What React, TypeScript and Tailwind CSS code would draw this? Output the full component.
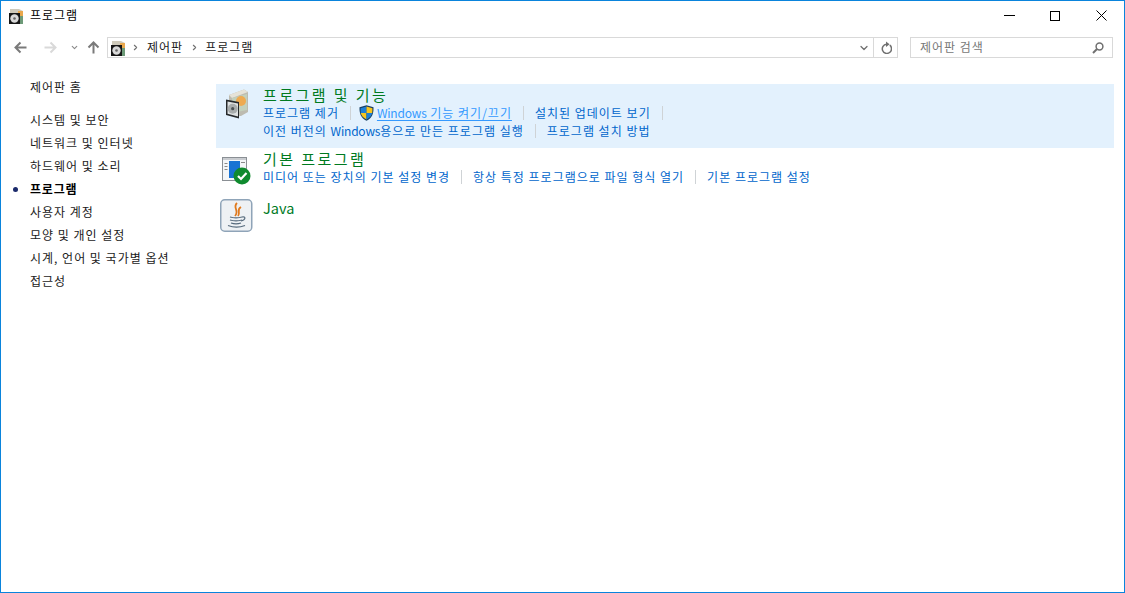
import { ChevronDown, ChevronRight } from "lucide-react";
import type { ReactNode } from "react";

const font = { fontFamily: '"Noto Sans CJK KR", "Noto Sans", sans-serif' };

function SmallProgramsIcon() {
  return (
    <svg width="16" height="16" viewBox="0 0 16 16">
      <path d="M2 1 L11 1 L15 3 L15 8 L2 5 Z" fill="#cfcabb" />
      <rect x="10" y="3" width="5" height="5" fill="#eaa84c" />
      <rect x="10" y="8" width="5" height="8" fill="#6d9a78" />
      <rect x="1" y="5" width="11" height="11" fill="#161616" />
      <circle cx="6.5" cy="10.5" r="4.2" fill="#d9d9d9" />
      <circle cx="6.5" cy="10.5" r="1.3" fill="#666" />
    </svg>
  );
}

function BigProgramsIcon() {
  return (
    <svg width="26" height="30" viewBox="0 0 26 30">
      <path d="M5 6 L20 0.5 L24 3 L24 23 L17 27 L5 27 Z" fill="#bdbbb0" />
      <path d="M5 6 L20 0.5 L24 3 L8 9 Z" fill="#e6e3d8" />
      <path d="M8 9 L23 5 L23 21 L8 24 Z" fill="#c3d0bb" />
      <circle cx="17" cy="12" r="5" fill="#eeaa50" />
      <path d="M2 10.5 L15 13 L15 29.5 L2 26 Z" fill="#26292b" />
      <path d="M3.5 12.5 L14 14.5 L14 27.5 L3.5 24.8 Z" fill="#dfe2e2" />
      <circle cx="8.7" cy="19.7" r="5" fill="#a9adad" />
      <circle cx="8.7" cy="19.7" r="1.6" fill="#4c5254" />
    </svg>
  );
}

function Shield() {
  return (
    <svg width="15" height="16" viewBox="0 0 15 16">
      <path d="M7.5 0.3 L14.5 2.3 C14.7 9 13 13 7.5 15.8 C2 13 0.3 9 0.5 2.3 Z" fill="#173f66" />
      <path d="M7.5 1.5 L7.5 8 L1.8 8 C1.6 6 1.6 4.5 1.6 3.2 Z" fill="#1d7fd6" />
      <path d="M7.5 1.5 L13.4 3.2 C13.4 4.5 13.4 6 13.2 8 L7.5 8 Z" fill="#f7c51e" />
      <path d="M1.8 8 L7.5 8 L7.5 14.5 C4 12.6 2.3 10.5 1.8 8 Z" fill="#f7c51e" />
      <path d="M7.5 8 L13.2 8 C12.7 10.5 11 12.6 7.5 14.5 Z" fill="#1d7fd6" />
    </svg>
  );
}

function Arrow({ dir, className }: { dir: "left" | "right" | "up"; className: string }) {
  const rotate = dir === "left" ? "" : dir === "right" ? "rotate-180" : "rotate-90";
  return (
    <svg width="13" height="13" viewBox="0 0 13 13" className={`${rotate} ${className}`}>
      <path d="M12.5 6.5 L1.5 6.5 M6.5 1.5 L1.5 6.5 L6.5 11.5" fill="none" stroke="currentColor" strokeWidth="2" />
    </svg>
  );
}

function Sep() {
  return <span className="mx-[11px] inline-block h-[14px] w-px bg-[#cfd3d6]" />;
}

function CatLink({ children }: { children: ReactNode }) {
  return <span className="text-[#0066cc]">{children}</span>;
}

function Latin({ children }: { children: ReactNode }) {
  return <span className="tracking-[-0.2px]">{children}</span>;
}

function Category({
  icon,
  title,
  active,
  className = "",
  iconClass,
  children,
}: {
  icon: ReactNode;
  title: ReactNode;
  active?: boolean;
  className?: string;
  iconClass: string;
  children?: ReactNode;
}) {
  return (
    <div className={`flex ${active ? "bg-[#e3f1fd]" : ""} ${className}`}>
      <div className={`flex w-[47px] shrink-0 items-start ${iconClass}`}>{icon}</div>
      <div className="flex flex-col">
        <div className="h-[19px] text-[15px] leading-[19px] tracking-[2.45px] text-[#007a1f]">{title}</div>
        {children}
      </div>
    </div>
  );
}

export default function App() {
  const nav = ["시스템 및 보안", "네트워크 및 인터넷", "하드웨어 및 소리", "프로그램", "사용자 계정", "모양 및 개인 설정", "시계, 언어 및 국가별 옵션", "접근성"];
  return (
    <div className="flex h-[593px] w-[1125px] flex-col overflow-hidden border border-[#0a84dc] bg-white text-[12px] tracking-[1px] text-[#1a1a1a]" style={font}>
      {/* title bar */}
      <div className="flex h-[29px] shrink-0 items-center">
        <div className="ml-[7px] mr-[6px] flex"><SmallProgramsIcon /></div>
        <span className="-mt-[2px] leading-none text-black">프로그램</span>
        <div className="ml-auto flex items-center text-black">
          <div className="flex w-[46px] justify-center">
            <span className="h-px w-[11px] bg-black" />
          </div>
          <div className="flex w-[46px] justify-center">
            <span className="h-[10px] w-[10px] border border-black" />
          </div>
          <div className="flex w-[46px] justify-center">
            <svg width="11" height="11" viewBox="0 0 11 11">
              <path d="M0.5 0.5 L10.5 10.5 M10.5 0.5 L0.5 10.5" stroke="#000" strokeWidth="1" />
            </svg>
          </div>
        </div>
      </div>
      {/* address row */}
      <div className="mt-[7px] flex h-[21px] shrink-0 items-center">
        <div className="flex w-[106px] items-center pl-[13px]">
          <Arrow dir="left" className="text-[#7a7a7a]" />
          <Arrow dir="right" className="ml-[17px] text-[#d9d9d9]" />
          <ChevronDown size={9} strokeWidth={3} className="ml-[13px] text-[#8a8a8a]" />
          <Arrow dir="up" className="ml-[8px] text-[#7a7a7a]" />
        </div>
        <div className="flex h-[21px] w-[791px] items-center border border-[#d9d9d9]">
          <div className="ml-[2px] flex"><SmallProgramsIcon /></div>
          <ChevronRight size={9} strokeWidth={3} className="ml-[5px] text-[#707070]" />
          <span className="-mt-[2px] ml-[7px]">제어판</span>
          <ChevronRight size={9} strokeWidth={3} className="ml-[7px] text-[#707070]" />
          <span className="-mt-[2px] ml-[6px]">프로그램</span>
          <ChevronDown size={12} strokeWidth={2.5} className="ml-auto mr-[3px] text-[#707070]" />
          <div className="flex h-full w-[24px] items-center justify-center border-l border-[#d9d9d9]">
            <svg width="12" height="13" viewBox="0 0 12 13">
              <path d="M9.8 4.2 A4.6 4.6 0 1 1 6.5 3.2" fill="none" stroke="#707070" strokeWidth="1.5" />
              <path d="M6 0.4 L6 6 L9.6 3.2 Z" fill="#707070" />
            </svg>
          </div>
        </div>
        <div className="ml-[12px] flex h-[21px] w-[203px] items-center border border-[#d9d9d9] pl-[9px] pr-[8px] text-[#777]">
          <span className="-mt-[2px]">제어판 검색</span>
          <svg width="12" height="12" viewBox="0 0 12 12" className="ml-auto">
            <circle cx="7.5" cy="4.5" r="3.4" fill="none" stroke="#707070" strokeWidth="1.5" />
            <path d="M5 7 L1 11" stroke="#707070" strokeWidth="2" />
          </svg>
        </div>
      </div>
      {/* body */}
      <div className="flex min-h-0 flex-1">
        <aside className="w-[215px] shrink-0 pl-[29px] pt-[20px]">
          <div className="h-[23px] leading-[18px]">제어판 홈</div>
          <div className="mt-[10px] flex flex-col">
            {nav.map((n) => (
              <div key={n} className="relative h-[23px] leading-[18px]">
                {n === "프로그램" && <span className="absolute left-[-17px] top-[7px] h-[5px] w-[5px] rounded-full bg-[#1b2a6b]" />}
                <span className={n === "프로그램" ? "font-bold tracking-[0.8px] text-black" : ""}>{n}</span>
              </div>
            ))}
          </div>
        </aside>
        <main className="flex w-[898px] flex-col pt-[26px]">
          <Category active title="프로그램 및 기능" icon={<BigProgramsIcon />} iconClass="pl-[8px] pt-[4px]" className="h-[64px] pt-[1px]">
            <div className="flex h-[18px] items-center whitespace-nowrap">
              <CatLink>프로그램 제거</CatLink>
              <Sep />
              <span className="-ml-[3px] mr-[3px] flex"><Shield /></span>
              <span className="text-[#3399ff] underline underline-offset-2"><Latin>Windows</Latin> 기능 켜기/끄기</span>
              <Sep />
              <CatLink>설치된 업데이트 보기</CatLink>
              <Sep />
            </div>
            <div className="flex h-[18px] items-center whitespace-nowrap">
              <CatLink>이전 버전의 <Latin>Windows</Latin>용으로 만든 프로그램 실행</CatLink>
              <Sep />
              <CatLink>프로그램 설치 방법</CatLink>
            </div>
          </Category>
          <Category
            title="기본 프로그램"
            className="h-[47px] pt-[1px]"
            iconClass="pl-[6px] pt-[8px]"
            icon={
              <svg width="30" height="28" viewBox="0 0 30 28">
                <rect x="0.5" y="0.5" width="24" height="23" fill="#f4f6f8" stroke="#8a8f94" />
                <rect x="1" y="1" width="23" height="2" fill="#c9ccd0" />
                <rect x="7" y="4" width="11" height="17" fill="#1873d3" />
                <rect x="2.5" y="6" width="3" height="1" fill="#8a8a8a" />
                <rect x="2.5" y="9" width="3" height="1" fill="#8a8a8a" />
                <rect x="2.5" y="12" width="3" height="1" fill="#8a8a8a" />
                <rect x="19" y="5" width="4" height="1" fill="#8a8a8a" />
                <circle cx="20" cy="19" r="8.5" fill="#0f8a2e" />
                <path d="M16 19 L19 22 L24.5 16" fill="none" stroke="#fff" strokeWidth="2.2" />
              </svg>
            }
          >
            <div className="flex h-[18px] items-center whitespace-nowrap">
              <CatLink>미디어 또는 장치의 기본 설정 변경</CatLink>
              <Sep />
              <CatLink>항상 특정 프로그램으로 파일 형식 열기</CatLink>
              <Sep />
              <CatLink>기본 프로그램 설정</CatLink>
            </div>
          </Category>
          <Category
            title={<span className="text-[14.5px] tracking-normal">Java</span>}
            className="pt-[3px]"
            iconClass="pl-[4px] pt-[1px]"
            icon={
              <svg width="33" height="33" viewBox="0 0 33 33">
                <rect x="0.75" y="0.75" width="31" height="31.5" rx="4" fill="#eef1f4" stroke="#8fa4b8" strokeWidth="1.5" />
                <path d="M17 4 C12 9 20 11 15 17 M21 8 C16 11 21 13 18 17" fill="none" stroke="#e07a1e" strokeWidth="1.8" />
                <path d="M10 18 C13 19 19 19 22 18 M10 21 C13 22 19 22 22 21 M11 24 C14 25 18 25 21 24" fill="none" stroke="#566a7c" strokeWidth="1.3" />
                <path d="M22 18 C26 17 26 21 21 22" fill="none" stroke="#566a7c" strokeWidth="1.2" />
                <path d="M8 26.5 C13 28.5 20 28.5 25 26.5" fill="none" stroke="#566a7c" strokeWidth="1.3" />
              </svg>
            }
          />
        </main>
      </div>
    </div>
  );
}
